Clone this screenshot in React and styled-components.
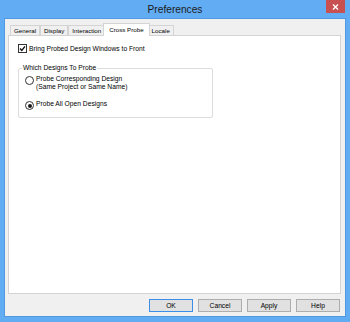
import React from "react";
import styled, { createGlobalStyle } from "styled-components";

const GlobalStyle = createGlobalStyle`
  html, body {
    margin: 0;
    padding: 0;
    background: #ffffff;
  }
  * {
    box-sizing: border-box;
  }
`;

const Window = styled.div`
  width: 350px;
  height: 322px;
  display: flex;
  flex-direction: column;
  padding: 0 5px 6px;
  background: #62acf4;
  font-family: "Liberation Sans", Arial, sans-serif;
  font-size: 6.7px;
  color: #000;
`;

const TitleBar = styled.div`
  height: 19px;
  display: grid;
  grid-template-columns: 1fr auto 1fr;
  align-items: center;
`;

const Title = styled.div`
  grid-column: 2;
  font-size: 10.2px;
  color: #1b1b1b;
  line-height: 19px;
`;

const CloseButton = styled.div`
  grid-column: 3;
  justify-self: end;
  align-self: start;
  width: 19px;
  height: 13px;
  background: #c85050;
  display: flex;
  align-items: center;
  justify-content: center;
`;

const Client = styled.div`
  flex: 1;
  display: flex;
  flex-direction: column;
  padding: 4px 4px 4px 3px;
  background: #f0f0f0;
  box-shadow: 0 0 0 1px #5199e0;
`;

const TabStrip = styled.div`
  height: 12px;
  display: flex;
  align-items: flex-end;
  padding-left: 2px;
  font-size: 6.2px;
`;

const Tab = styled.div`
  height: ${(p) => (p.$active ? 13 : 10)}px;
  padding: 0 ${(p) => (p.$active ? 5 : 3)}px;
  margin: 0 ${(p) => (p.$active ? -2 : 0)}px ${(p) => (p.$active ? -1 : 0)}px;
  border: 1px solid #d4d4d4;
  border-bottom: none;
  background: ${(p) => (p.$active ? "#ffffff" : "#f0f0f0")};
  line-height: ${(p) => (p.$active ? 11 : 9)}px;
  white-space: nowrap;
  z-index: ${(p) => (p.$active ? 1 : 0)};
`;

const Panel = styled.div`
  flex: 1;
  background: #ffffff;
  border: 1px solid #d4d4d4;
  padding: 8px 9px;
  display: flex;
  flex-direction: column;
  align-items: flex-start;
`;

const CheckRow = styled.label`
  display: flex;
  align-items: center;
  gap: 2px;
  height: 9px;
  line-height: 8px;
`;

const GroupBox = styled.fieldset`
  margin: 11px 0 0;
  width: 195px;
  padding: 3px 6px 7px;
  border: 1px solid #dcdcdc;
  border-radius: 2px;
  min-width: 0;
`;

const Legend = styled.legend`
  margin-left: -3px;
  padding: 0 1px;
  line-height: 8px;
  height: 8px;
`;

const Option = styled.label`
  display: flex;
  align-items: flex-start;
  gap: 2px;
  line-height: 8px;
  & + & {
    margin-top: 9px;
  }
`;

const Radio = styled.span`
  flex: none;
  width: 9px;
  height: 9px;
  margin-top: 1px;
  border-radius: 50%;
  border: 1px solid #333333;
  background: #ffffff;
  display: flex;
  align-items: center;
  justify-content: center;
  &::after {
    content: "";
    width: 4px;
    height: 4px;
    border-radius: 50%;
    background: ${(p) => (p.$checked ? "#1a1a1a" : "transparent")};
  }
`;

const ButtonRow = styled.div`
  margin-top: 5px;
  padding-right: 1px;
  display: flex;
  justify-content: flex-end;
  gap: 5px;
`;

const Button = styled.div`
  width: 44px;
  height: 13px;
  border: 1px solid ${(p) => (p.$default ? "#3d8ee6" : "#adadad")};
  background: #e1e1e1;
  display: flex;
  align-items: center;
  justify-content: center;
  line-height: 11px;
`;

const CheckBox = () => (
  <svg width="9" height="9" viewBox="0 0 9 9">
    <rect x="0.5" y="0.5" width="8" height="8" fill="#fff" stroke="#333" />
    <path d="M2 4.5 L3.8 6.4 L7 2.4" fill="none" stroke="#111" strokeWidth="1.4" />
  </svg>
);

const tabs = ["General", "Display", "Interaction", "Cross Probe", "Locale"];
const buttons = ["OK", "Cancel", "Apply", "Help"];

export default function App() {
  return (
    <>
      <GlobalStyle />
      <Window>
        <TitleBar>
          <Title>Preferences</Title>
          <CloseButton>
            <svg width="7" height="6" viewBox="0 0 7 6">
              <path d="M1 0.5 L6 5.5 M6 0.5 L1 5.5" stroke="#fff" strokeWidth="1.4" />
            </svg>
          </CloseButton>
        </TitleBar>
        <Client>
          <TabStrip>
            {tabs.map((t) => (
              <Tab key={t} $active={t === "Cross Probe"}>
                {t}
              </Tab>
            ))}
          </TabStrip>
          <Panel>
            <CheckRow>
              <CheckBox />
              <span>Bring Probed Design Windows to Front</span>
            </CheckRow>
            <GroupBox>
              <Legend>Which Designs To Probe</Legend>
              <Option>
                <Radio />
                <span>
                  Probe Corresponding Design
                  <br />
                  (Same Project or Same Name)
                </span>
              </Option>
              <Option>
                <Radio $checked />
                <span>Probe All Open Designs</span>
              </Option>
            </GroupBox>
          </Panel>
          <ButtonRow>
            {buttons.map((b) => (
              <Button key={b} $default={b === "OK"}>
                {b}
              </Button>
            ))}
          </ButtonRow>
        </Client>
      </Window>
    </>
  );
}
